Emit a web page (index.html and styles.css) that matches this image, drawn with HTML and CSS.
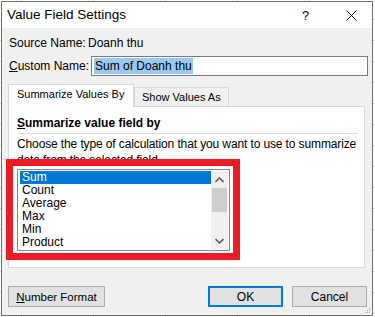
FILE: index.html
```html
<!DOCTYPE html>
<html lang="en">
<head>
    <meta charset="utf-8">
    <title>Value Field Settings</title>
    <meta name="viewport" content="width=device-width, initial-scale=1">
    <link rel="stylesheet" href="styles.css">
</head>
<body>
    <div class="dialog">
        <div class="titlebar">
            <span class="title">Value Field Settings</span>
            <span class="help">?</span>
            <span class="close">
                <svg width="11" height="11" viewBox="0 0 11 11"><path d="M0.5 0.5 L10.5 10.5 M10.5 0.5 L0.5 10.5" stroke="#000" stroke-width="1" fill="none"/></svg>
            </span>
        </div>

        <div class="content">
            <div class="row source-row">
                <span class="label">Source Name:</span>
                <span class="value">Doanh thu</span>
            </div>

            <div class="row custom-row">
                <span class="label"><u>C</u>ustom Name:</span>
                <div class="input-field"><span class="selected">Sum of Doanh thu</span></div>
            </div>

            <div class="tabs">
                <div class="tab active">Summarize Values By</div>
                <div class="tab">Show Values As</div>
            </div>

            <div class="panel">
                <div class="group-title"><u>S</u>ummarize value field by</div>
                <div class="separator"></div>
                <p class="desc">Choose the type of calculation that you want to use to summarize data from the selected field</p>

                <div class="listbox">
                    <ul class="items">
                        <li class="selected-item">Sum</li>
                        <li>Count</li>
                        <li>Average</li>
                        <li>Max</li>
                        <li>Min</li>
                        <li>Product</li>
                    </ul>
                    <div class="scrollbar">
                        <div class="arrow">
                            <svg width="9" height="6" viewBox="0 0 9 6"><path d="M0.5 5 L4.5 1 L8.5 5" stroke="#606060" stroke-width="1.6" fill="none"/></svg>
                        </div>
                        <div class="thumb"></div>
                        <div class="track"></div>
                        <div class="arrow">
                            <svg width="9" height="6" viewBox="0 0 9 6"><path d="M0.5 1 L4.5 5 L8.5 1" stroke="#606060" stroke-width="1.6" fill="none"/></svg>
                        </div>
                    </div>
                </div>

                <div class="highlight-box"></div>
            </div>

            <div class="buttons">
                <button class="btn number-btn"><u>N</u>umber Format</button>
                <div class="spacer"></div>
                <button class="btn ok-btn">OK</button>
                <button class="btn cancel-btn">Cancel</button>
            </div>
        </div>

        <svg class="grip" width="8" height="8" viewBox="0 0 8 8">
            <rect x="6" y="2" width="1" height="1" fill="#a0a0a0"/>
            <rect x="4" y="4" width="1" height="1" fill="#a0a0a0"/>
            <rect x="6" y="4" width="1" height="1" fill="#a0a0a0"/>
            <rect x="2" y="6" width="1" height="1" fill="#a0a0a0"/>
            <rect x="4" y="6" width="1" height="1" fill="#a0a0a0"/>
            <rect x="6" y="6" width="1" height="1" fill="#a0a0a0"/>
        </svg>
    </div>
</body>
</html>
```

FILE: styles.css
```css
* {
    margin: 0;
    padding: 0;
    box-sizing: border-box;
}

body {
    width: 375px;
    height: 317px;
    overflow: hidden;
    font-family: "Liberation Sans", Arial, sans-serif;
    font-size: 12px;
    color: #000;
    background-color: #fff;
    background-image:
        linear-gradient(to right, #d4d4d4 1px, transparent 1px),
        linear-gradient(to bottom, #d4d4d4 1px, transparent 1px);
    background-size: 72px 100%, 100% 21px;
    background-position: 21px 0, 0 19px;
}

.dialog {
    position: relative;
    margin: 1px 0 0 1px;
    width: 372px;
    height: 315px;
    border: 1px solid #707070;
    background: #f0f0f0;
    white-space: nowrap;
}

.titlebar {
    height: 26px;
    background: #fff;
    display: flex;
    align-items: center;
}

.title {
    flex: 1;
    padding-left: 5px;
    font-size: 13.5px;
    line-height: 20px;
}

.help {
    width: 20px;
    font-size: 13px;
    margin-right: 24px;
}

.close {
    display: flex;
    width: 20px;
    margin-right: 6px;
}

.content {
    padding: 7px 4px 0 6px;
}

.row {
    display: flex;
    align-items: center;
}

.label {
    flex-shrink: 0;
}

.source-row {
    height: 16px;
    padding-left: 1px;
}

.source-row .label {
    width: 79px;
}

.custom-row {
    margin-top: 5px;
    height: 20px;
    padding-left: 1px;
}

.custom-row .label {
    width: 82px;
}

.input-field {
    width: 277px;
    height: 20px;
    border: 1px solid #7a7a7a;
    background: #fff;
    padding: 1px 2px;
    line-height: 16px;
}

.selected {
    background: #99c9ef;
    padding: 0 1px;
    display: inline-block;
    line-height: 16px;
}

.tabs {
    display: flex;
    align-items: flex-end;
    margin-top: 8px;
    height: 22px;
    position: relative;
    z-index: 2;
    font-size: 11px;
}

.tab {
    height: 19px;
    border: 1px solid #d9d9d9;
    border-bottom: none;
    background: #f0f0f0;
    line-height: 18px;
    width: 95px;
    padding-left: 7px;
}

.tab.active {
    height: 23px;
    width: 126px;
    background: #fff;
    padding-left: 8px;
    line-height: 16px;
    padding-top: 1px;
    margin-bottom: -1px;
}

.panel {
    position: relative;
    width: 357px;
    height: 162px;
    border: 1px solid #d9d9d9;
    background: #fff;
    padding: 8px 6px 0 8px;
}

.group-title {
    font-weight: bold;
    line-height: 16px;
}

.separator {
    margin-top: 2px;
    height: 1px;
    background: #dcdcdc;
}

.desc {
    margin-top: 2px;
    margin-right: -6px;
    letter-spacing: -0.12px;
    line-height: 16px;
    height: 32px;
    overflow: hidden;
    white-space: normal;
}

.listbox {
    display: flex;
    margin-top: 1px;
    width: 213px;
    height: 82px;
    border: 1px solid #828790;
    background: #fff;
    padding: 1px;
}

.items {
    list-style: none;
    flex: 1;
    padding-left: 1px;
}

.items li {
    height: 13px;
    line-height: 13px;
    padding-left: 2px;
}

.items .selected-item {
    background: #0078d7;
    color: #fff;
}

.scrollbar {
    width: 17px;
    display: flex;
    flex-direction: column;
    background: #f0f0f0;
}

.arrow {
    height: 17px;
    display: flex;
    align-items: center;
    justify-content: center;
}

.thumb {
    height: 24px;
    margin: 0 1px;
    background: #cdcdcd;
}

.track {
    flex: 1;
}

.highlight-box {
    position: absolute;
    left: -3px;
    top: 52px;
    width: 234px;
    height: 101px;
    border: 7px solid #ed1c24;
}

.buttons {
    display: flex;
    margin-top: 18px;
}

.btn {
    height: 21px;
    border: 1px solid #adadad;
    background: #e1e1e1;
    font-family: inherit;
    font-size: 12px;
    color: #000;
}

.number-btn {
    width: 97px;
    font-size: 11.5px;
}

.spacer {
    flex: 1;
}

.ok-btn {
    width: 75px;
    border: 2px solid #0078d7;
}

.cancel-btn {
    width: 75px;
    margin-left: 9px;
    margin-right: 1px;
}

.grip {
    position: absolute;
    right: 1px;
    bottom: 1px;
}
```
